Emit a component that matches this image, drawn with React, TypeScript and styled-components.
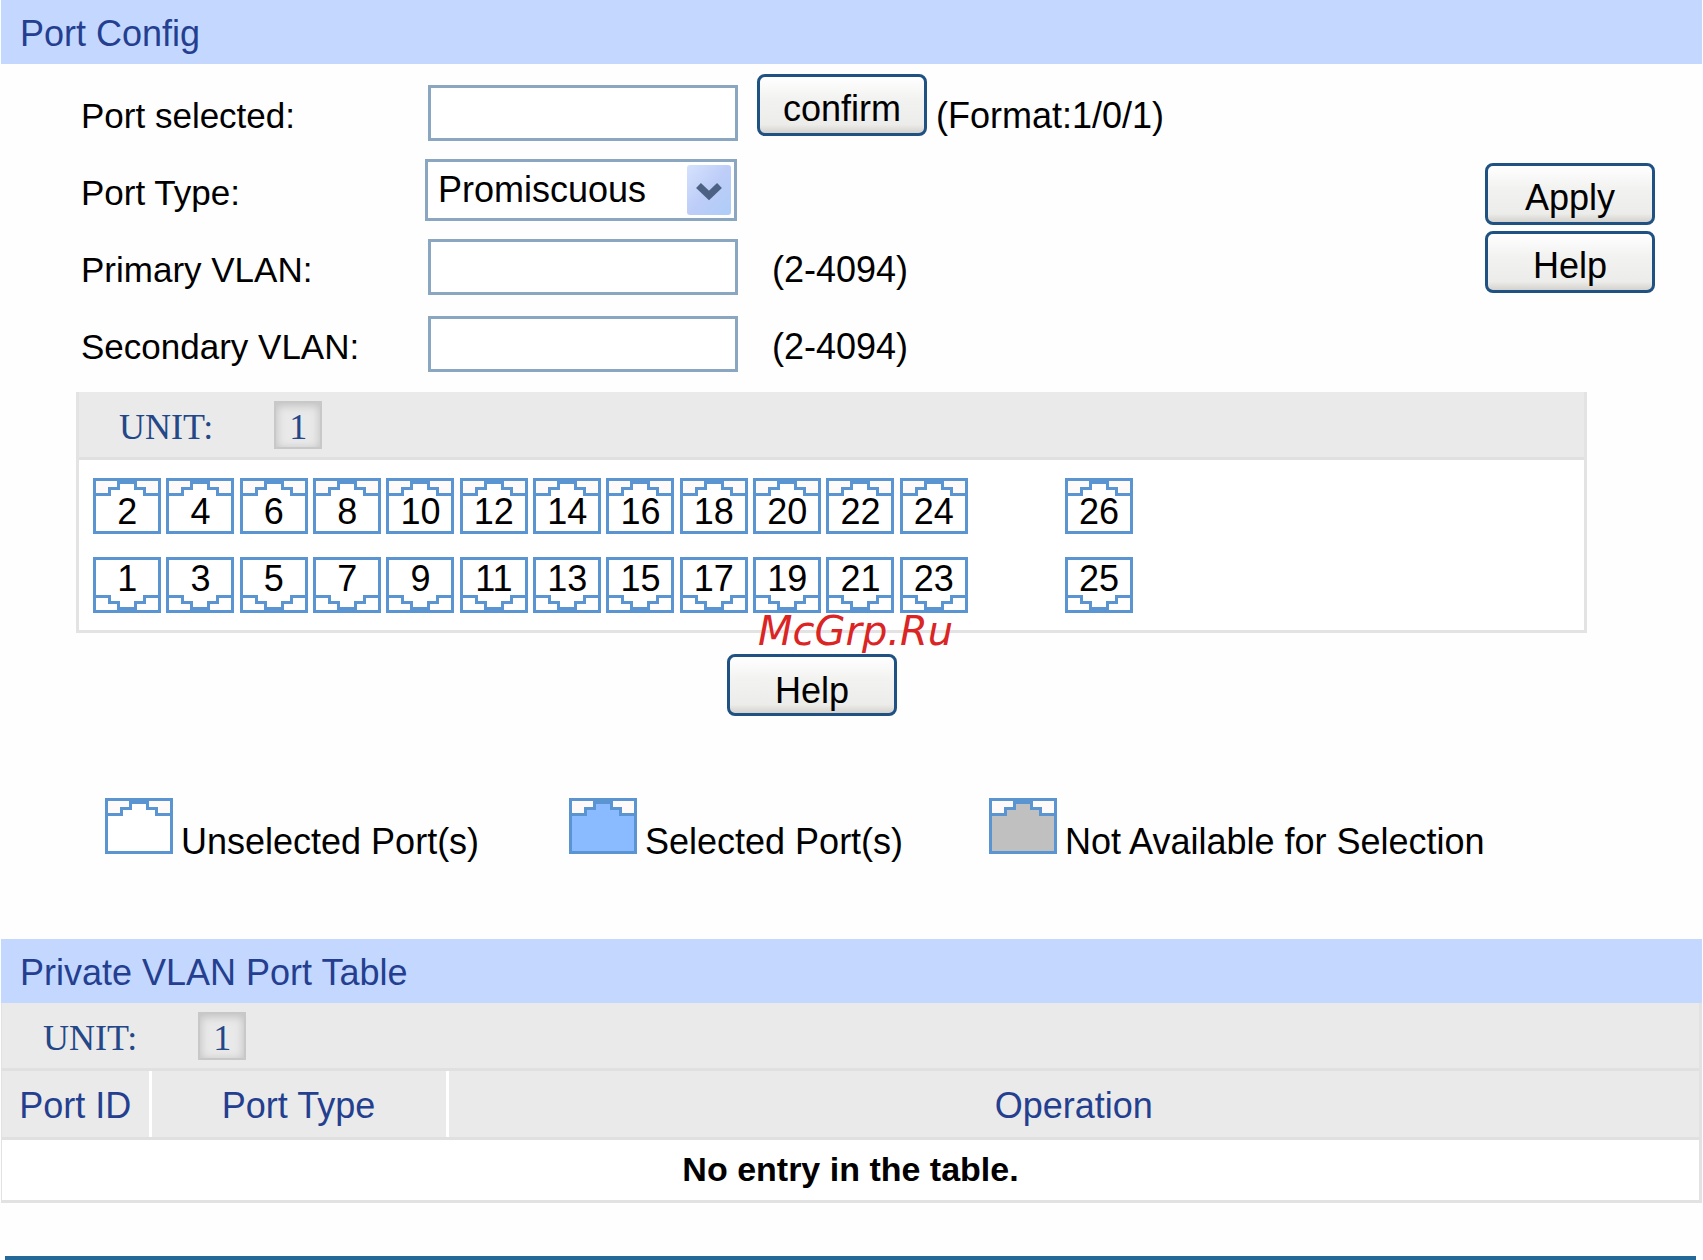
import React, { useState } from "react";
import styled, { createGlobalStyle } from "styled-components";

const GlobalStyle = createGlobalStyle`
  *, *::before, *::after { box-sizing: border-box; }
  body {
    margin: 0;
    background: #fefefe;
    color: #000;
    font-family: "Liberation Sans", Arial, sans-serif;
    font-size: 36px;
    line-height: 40px;
  }
  button, input, select { font: inherit; color: inherit; }
`;

const Page = styled.main`
  position: relative;
  padding: 0 1px;
`;

const SectionTitle = styled.h2`
  margin: 0;
  padding: 14px 19px 10px;
  background: #c4d8ff;
  color: #243f8f;
  font-size: 36px;
  line-height: 40px;
  font-weight: 400;
`;

const ConfigArea = styled.div`
  display: flex;
  align-items: center;
  justify-content: space-between;
  padding: 10px 47px 10px 80px;
`;

const Fields = styled.form`
  flex: 1;
`;

const Field = styled.div`
  display: flex;
  align-items: center;
  height: 77px;
`;

const FieldLabel = styled.label`
  width: 347px;
  padding-top: 6px;
  font-size: 35px;
`;

const TextInput = styled.input`
  width: 310px;
  height: 56px;
  padding: 0 12px;
  border: 3px solid #8aa6c0;
  background: #fff;
`;

const Hint = styled.span<{ $gap: number }>`
  padding: 6px 0 0 ${(p) => p.$gap}px;
`;

const SelectBox = styled.div`
  display: grid;
  align-items: center;
  width: 312px;
  margin-left: -3px;
`;

const Select = styled.select`
  grid-area: 1 / 1;
  width: 100%;
  height: 62px;
  padding: 0 56px 0 10px;
  border: 3px solid #8aa6c0;
  border-radius: 0;
  background: #fff;
  appearance: none;
`;

const SelectArrow = styled.svg`
  grid-area: 1 / 1;
  justify-self: end;
  width: 44px;
  height: 50px;
  margin-right: 6px;
  pointer-events: none;
`;

const Button = styled.button`
  width: 170px;
  height: 62px;
  padding: 7px 0 0;
  border: 3px solid #1f5283;
  border-radius: 8px;
  background: linear-gradient(#fff, #f2f2f1 40%, #ececea 85%, #d4d2cd);
  text-align: center;
`;

const ConfirmButton = styled(Button)`
  align-self: flex-start;
  margin-left: 19px;
`;

const SideButtons = styled.div`
  display: flex;
  flex-direction: column;
  gap: 6px;
`;

const PortPanel = styled.section`
  margin: 0 115px 0 75px;
  border: 3px solid #e3e3e3;
  border-top: 0;
  background: #fff;
`;

const UnitBar = styled.div<{ $indent: number }>`
  display: flex;
  align-items: center;
  gap: 61px;
  height: 68px;
  padding-left: ${(p) => p.$indent}px;
  border-bottom: 3px solid #e0e0e0;
  background: #eaeaea;
  color: #234787;
  font-family: "Liberation Serif", "Times New Roman", serif;

  & > span { padding-top: 4px; }
`;

const UnitButton = styled.button`
  width: 48px;
  height: 48px;
  padding: 4px 0 0;
  border: 2px solid #c8c8c8;
  background: #e9e9e9;
  box-shadow: inset 0 2px 9px 1px #c2c2c2;
`;

const PortBoard = styled.div`
  display: flex;
  gap: 97px;
  padding: 18px 14px 17px;
`;

const PortBlock = styled.div<{ $columns: number; $width: number }>`
  display: grid;
  grid-template-columns: repeat(${(p) => p.$columns}, 1fr);
  gap: 23px 5px;
  width: ${(p) => p.$width}px;
`;

const PortButton = styled.button<{ $lower: boolean }>`
  display: grid;
  height: 56px;
  padding: 0;
  border: 0;
  background: none;

  & > * { grid-area: 1 / 1; }
  & > span {
    z-index: 1;
    padding-top: ${(p) => (p.$lower ? 2 : 14)}px;
  }
`;

const Jack = styled.svg<{ $lower?: boolean }>`
  display: block;
  width: 68px;
  height: 56px;
  transform: ${(p) => (p.$lower ? "scaleY(-1)" : "none")};
`;

const Actions = styled.div`
  display: flex;
  justify-content: center;
  padding: 21px 79px 0 0;

  & > button { padding-top: 11px; }
`;

const Legend = styled.ul`
  display: flex;
  margin: 0;
  padding: 82px 0 85px 104px;
  list-style: none;
`;

const LegendItem = styled.li<{ $width: number }>`
  display: flex;
  gap: 8px;
  width: ${(p) => p.$width}px;
  white-space: nowrap;

  & > span { padding-top: 24px; height: 56px; }
`;

const TableFrame = styled.div`
  border: solid #e2e2e2;
  border-width: 0 3px 3px 1px;
`;

const Table = styled.table`
  width: 100%;
  border-collapse: collapse;
  table-layout: fixed;
`;

const HeadCell = styled.th<{ $width?: number }>`
  width: ${(p) => (p.$width ? `${p.$width}px` : "auto")};
  height: 67px;
  padding: 4px 0 0;
  border-right: 3px solid #fff;
  border-bottom: 3px solid #e0e0e0;
  background: #eaeaea;
  color: #243f8f;
  font-weight: 400;

  &:last-child { border-right: 0; }
`;

const EmptyCell = styled.td`
  height: 62px;
  padding: 0 0 1px;
  background: #fff;
  font-size: 34px;
  font-weight: 700;
  text-align: center;
`;

const FooterRule = styled.hr`
  height: 5px;
  margin: 53px 6px 0 4px;
  border: 0;
  background: #236897;
`;

const Watermark = styled.span`
  position: absolute;
  top: 607px;
  left: 758px;
  color: #db2525;
  font-family: "DejaVu Sans", sans-serif;
  font-size: 40px;
  line-height: 48px;
  font-style: italic;
  pointer-events: none;
`;

type JackProps = { fill?: string; corner?: string; lower?: boolean };

function PortJack({ fill = "#ffffff", corner = "#fffafa", lower }: JackProps) {
  return (
    <Jack $lower={lower} viewBox="0 0 68 56" aria-hidden="true">
      <rect x="1.5" y="1.5" width="65" height="53" fill={corner} />
      <path d="M1.5 16.5H16.5V10.5H25.5V4.5H42.5V10.5H51.5V16.5H66.5V54.5H1.5Z" fill={fill} />
      <rect x="25" y="0" width="18" height="5" fill="#5a94d1" />
      <g fill="none" stroke="#5a94d1" strokeWidth="3">
        <path d="M1.5 16.5H16.5V10.5H25.5V4.5H42.5V10.5H51.5V16.5H66.5" />
        <rect x="1.5" y="1.5" width="65" height="53" />
      </g>
    </Jack>
  );
}

const evenPorts = [2, 4, 6, 8, 10, 12, 14, 16, 18, 20, 22, 24];
const oddPorts = evenPorts.map((n) => n - 1);

export default function App() {
  const [selected, setSelected] = useState<number[]>([]);
  const toggle = (port: number) =>
    setSelected((now) => (now.includes(port) ? now.filter((n) => n !== port) : [...now, port]));

  const renderPort = (port: number) => {
    const lower = port % 2 === 1;
    return (
      <PortButton
        key={port}
        type="button"
        $lower={lower}
        aria-pressed={selected.includes(port)}
        onClick={() => toggle(port)}
      >
        <PortJack
          lower={lower}
          corner={lower ? "#ffffff" : "#fffafa"}
          fill={selected.includes(port) ? "#8abaff" : "#ffffff"}
        />
        <span>{port}</span>
      </PortButton>
    );
  };

  return (
    <Page>
      <GlobalStyle />
      <SectionTitle>Port Config</SectionTitle>
      <ConfigArea>
        <Fields id="port-config" onSubmit={(e) => e.preventDefault()}>
          <Field>
            <FieldLabel htmlFor="port-selected">Port selected:</FieldLabel>
            <TextInput id="port-selected" type="text" />
            <ConfirmButton type="button">confirm</ConfirmButton>
            <Hint $gap={9}>(Format:1/0/1)</Hint>
          </Field>
          <Field>
            <FieldLabel htmlFor="port-type">Port Type:</FieldLabel>
            <SelectBox>
              <Select id="port-type" defaultValue="Promiscuous">
                <option>Promiscuous</option>
                <option>Host</option>
              </Select>
              <SelectArrow viewBox="0 0 44 50" aria-hidden="true">
                <defs>
                  <linearGradient id="arrow-face" x1="0" y1="0" x2="1" y2="1">
                    <stop offset="0" stopColor="#d6e2fd" />
                    <stop offset="0.5" stopColor="#bdcdf8" />
                    <stop offset="1" stopColor="#adcdf7" />
                  </linearGradient>
                </defs>
                <rect width="44" height="50" rx="3" fill="url(#arrow-face)" />
                <path d="M11.500 20.500L22 30.500L32.500 20.500" fill="none" stroke="#4d6185" strokeWidth="7" />
              </SelectArrow>
            </SelectBox>
          </Field>
          <Field>
            <FieldLabel htmlFor="primary-vlan">Primary VLAN:</FieldLabel>
            <TextInput id="primary-vlan" type="text" />
            <Hint $gap={34}>(2-4094)</Hint>
          </Field>
          <Field>
            <FieldLabel htmlFor="secondary-vlan">Secondary VLAN:</FieldLabel>
            <TextInput id="secondary-vlan" type="text" />
            <Hint $gap={34}>(2-4094)</Hint>
          </Field>
        </Fields>
        <SideButtons>
          <Button type="submit" form="port-config">Apply</Button>
          <Button type="button">Help</Button>
        </SideButtons>
      </ConfigArea>

      <PortPanel>
        <UnitBar $indent={40}>
          <span>UNIT:</span>
          <UnitButton type="button">1</UnitButton>
        </UnitBar>
        <PortBoard>
          <PortBlock $columns={12} $width={875}>
            {evenPorts.map(renderPort)}
            {oddPorts.map(renderPort)}
          </PortBlock>
          <PortBlock $columns={1} $width={68}>
            {[26, 25].map(renderPort)}
          </PortBlock>
        </PortBoard>
      </PortPanel>

      <Actions>
        <Button type="button">Help</Button>
      </Actions>

      <Legend>
        <LegendItem $width={464}>
          <PortJack />
          <span>Unselected Port(s)</span>
        </LegendItem>
        <LegendItem $width={420}>
          <PortJack fill="#8abaff" />
          <span>Selected Port(s)</span>
        </LegendItem>
        <LegendItem $width={500}>
          <PortJack fill="#c0c0c0" />
          <span>Not Available for Selection</span>
        </LegendItem>
      </Legend>

      <SectionTitle>Private VLAN Port Table</SectionTitle>
      <TableFrame>
        <UnitBar $indent={41}>
          <span>UNIT:</span>
          <UnitButton type="button">1</UnitButton>
        </UnitBar>
        <Table>
          <thead>
            <tr>
              <HeadCell scope="col" $width={148}>Port ID</HeadCell>
              <HeadCell scope="col" $width={297}>Port Type</HeadCell>
              <HeadCell scope="col">Operation</HeadCell>
            </tr>
          </thead>
          <tbody>
            <tr>
              <EmptyCell colSpan={3}>No entry in the table.</EmptyCell>
            </tr>
          </tbody>
        </Table>
      </TableFrame>
      <FooterRule />
      <Watermark>McGrp.Ru</Watermark>
    </Page>
  );
}
